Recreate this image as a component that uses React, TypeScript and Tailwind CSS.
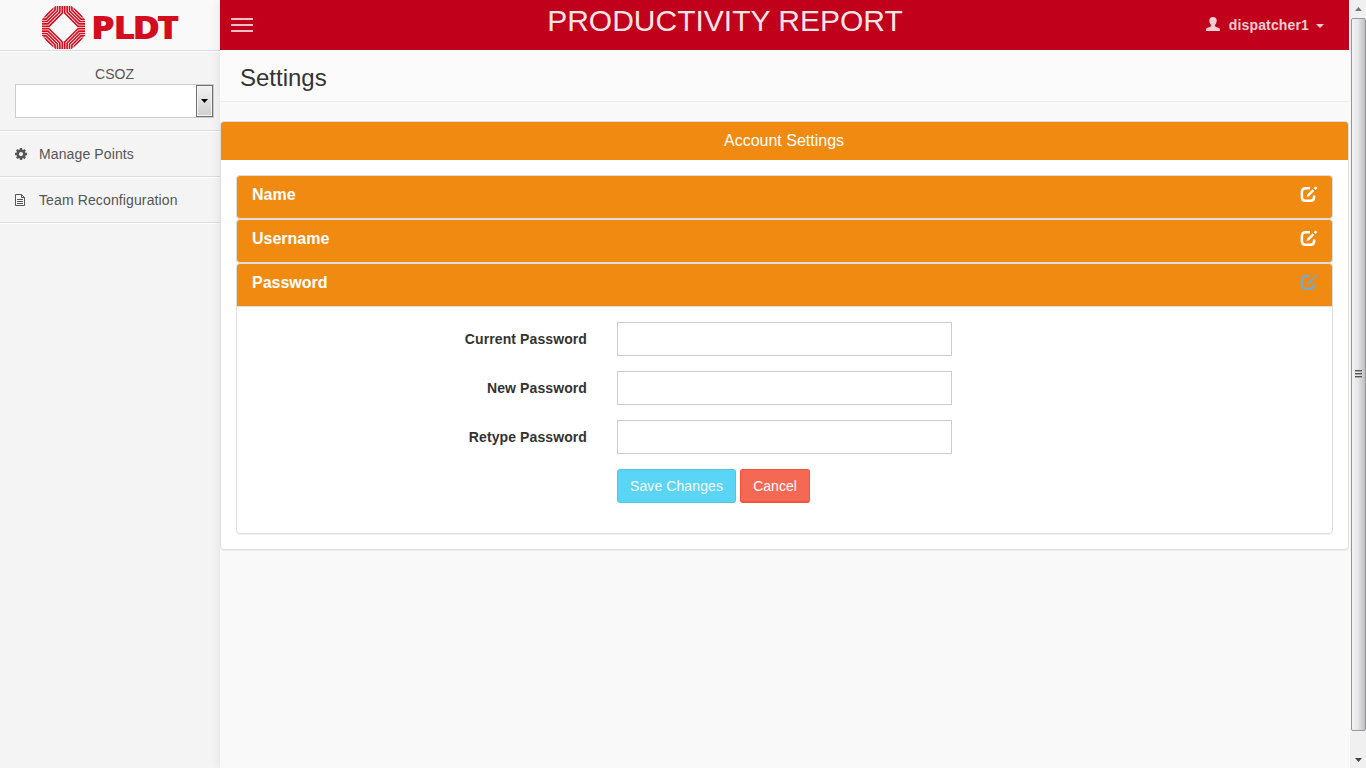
import React from "react";

const SPOKES = [1.2, 3.6, 6, 8.4, 10.8];

function LogoMark() {
  return (
    <svg width="44" height="44" viewBox="-22.5 -22.5 44 44" className="block">
      <defs>
        <clipPath id="octagon">
          <path d="M-8 -21.5H8L15.500 -15.500L21.500 -8V8L15.500 15.500L8 21.500H-8L-15.500 15.500L-21.500 8V-8L-15.500 -15.500Z" />
        </clipPath>
      </defs>
      <g clipPath="url(#octagon)" fill="none" stroke="#d50b1e" strokeWidth="1.65">
        {[[1, 1], [-1, 1], [1, -1], [-1, -1]].map(([sx, sy]) => (
          <g key={`${sx}${sy}`} transform={`scale(${sx} ${sy})`}>
            {SPOKES.map((o) => {
              const bend = 14 + o * 0.42;
              return <path key={o} d={`M${o} 22V${bend}L${bend} ${o}H22`} />;
            })}
          </g>
        ))}
      </g>
    </svg>
  );
}

function Logo() {
  return (
    <div className="flex h-[50px] shrink-0 items-start bg-[#f9f9f9] pl-[41px]">
      <div className="pt-[5px]"><LogoMark /></div>
      <svg width="100" height="50" viewBox="0 0 100 50" fill="#d50b1e" fontFamily="Open Sans, sans-serif" fontWeight="800" fontSize="32" className="ml-[6px]">
        <g transform="scale(1.18 1)">
          <text y="39" x="0 19 35.200 55.900">PLDT</text>
        </g>
      </svg>
    </div>
  );
}

function GearIcon() {
  return (
    <svg width="14" height="14" viewBox="0 0 1792 1792" fill="currentColor">
      <path d="M1152 896q0-106-75-181t-181-75-181 75-75 181 75 181 181 75 181-75 75-181zm512-109v222q0 12-8 23t-20 13l-185 28q-19 54-39 91 35 50 107 138 10 12 10 25t-9 23q-27 37-99 108t-94 71q-12 0-26-9l-138-108q-44 23-91 38-16 136-29 186-7 28-36 28h-222q-14 0-24.500-8.500t-11.500-21.500l-28-184q-49-16-90-37l-141 107q-10 9-25 9-14 0-25-11-126-114-165-168-7-10-7-23 0-12 8-23 15-21 51-66.500t54-70.500q-27-50-41-99l-183-27q-13-2-21-12.500t-8-23.500v-222q0-12 8-23t19-13l186-28q14-46 39-92-40-57-107-138-10-12-10-24 0-10 9-23 26-36 98.500-107.500t94.500-71.500q13 0 26 10l138 107q44-23 91-38 16-136 29-186 7-28 36-28h222q14 0 24.500 8.500t11.500 21.500l28 184q49 16 90 37l142-107q9-9 24-9 13 0 25 10 129 119 165 170 7 8 7 22 0 12-8 23-15 21-51 66.500t-54 70.500q26 50 41 98l183 28q13 2 21 12.500t8 23.500z" />
    </svg>
  );
}

function FileIcon() {
  return (
    <svg width="12" height="14" viewBox="0 0 12 14" fill="none" stroke="currentColor">
      <path d="M1.500 1.500H7.500L10.500 4.500V12.500H1.500Z" />
      <path d="M7.500 1.500V4.500H10.500M3 6.500H9M3 8.500H9M3 10.500H9" />
    </svg>
  );
}

function UserIcon() {
  return (
    <svg width="14" height="14" viewBox="0 0 14 14" fill="currentColor" className="-mt-[2px]">
      <path d="M7 0C4.600 0 3.300 1.300 3.300 3.400c0 1.900.7 3.500 1.800 4.500v1.300C4.300 10.100.3 10.500 0 12.100V14h14v-1.900c-.3-1.600-4.300-2-5.100-2.900V7.900c1.100-1 1.800-2.600 1.800-4.500C10.700 1.300 9.400 0 7 0Z" />
    </svg>
  );
}

function EditIcon() {
  return (
    <svg width="18" height="17" viewBox="0 0 18 17" fill="none">
      <path d="M10 2.200H5.500Q1.900 2.200 1.900 5.800V11.200Q1.900 14.800 5.500 14.800H10.500Q14.100 14.800 14.100 11.200V9.400" stroke="currentColor" strokeWidth="2.500" />
      <path d="M6.600 11L7.400 8.500L12.600 3.300L14.300 5L9.100 10.200Z" fill="currentColor" />
      <path d="M13.700 2.200L15 .9Q15.600.3 16.200.9L16.900 1.600Q17.500 2.200 16.900 2.800L15.500 4.100Z" fill="currentColor" />
    </svg>
  );
}

function NavItem({ icon, label }: { icon: React.ReactNode; label: string }) {
  return (
    <a className="flex h-[46px] items-center border-b border-[#dbdbdb] pl-[14px] text-[14px] tracking-[0.12px] text-[#555] shadow-[0_1px_0_#fff]">
      <span className="flex w-[25px]">{icon}</span>
      <span className="pt-[2px]">{label}</span>
    </a>
  );
}

function Sidebar() {
  return (
    <aside className="flex w-[220px] shrink-0 flex-col bg-[#f4f4f4]">
      <Logo />
      <div className="h-[81px] border-y border-[#dbdbdb] pl-[15px] pt-[14px] shadow-[0_1px_0_#fff,inset_0_1px_0_#fff]">
        <div className="w-[199px] pb-px text-center text-[14px] leading-[18px] text-[#555]">CSOZ</div>
        <div className="flex h-[34px] w-[199px] justify-end border border-[#ccc] bg-white">
          <div className="flex w-[17px] items-center justify-center border border-[#707070] bg-linear-to-b from-[#f2f2f2] to-[#cfcfcf] shadow-[inset_0_0_0_1px_#f5f5f5]">
            <svg width="7" height="4" viewBox="0 0 7 4"><path d="M0 0H7L3.500 4Z" fill="#000" /></svg>
          </div>
        </div>
      </div>
      <nav>
        <NavItem icon={<GearIcon />} label="Manage Points" />
        <NavItem icon={<FileIcon />} label="Team Reconfiguration" />
      </nav>
    </aside>
  );
}

function Header() {
  return (
    <header className="flex h-[50px] shrink-0 bg-[#c1001b] text-[#f3cdd2]">
      <div className="flex w-[210px] flex-col gap-[4px] pl-[11px] pt-[18px]">
        <span className="h-[2px] w-[22px] bg-[#f0bfc6]" />
        <span className="h-[2px] w-[22px] bg-[#f0bfc6]" />
        <span className="h-[2px] w-[22px] bg-[#f0bfc6]" />
      </div>
      <h1 className="w-[590px] pt-[4px] text-center text-[30px] leading-[34px] text-[#f9e5e8]">PRODUCTIVITY REPORT</h1>
      <div className="flex grow items-center justify-end pr-[25px] text-[14px] font-bold">
        <UserIcon />
        <span className="pl-[9px] pr-[7px] tracking-[0.15px]">dispatcher1</span>
        <svg width="8" height="4" viewBox="0 0 8 4" className="mt-[2px]"><path d="M0 0H8L4 4Z" fill="currentColor" /></svg>
      </div>
    </header>
  );
}

function PanelHeading({ title, active = false }: { title: string; active?: boolean }) {
  return (
    <div className="flex h-[42px] justify-between pl-[15px] pr-[14px] pt-[10px] text-[16px] font-bold leading-[18px] text-white">
      <span>{title}</span>
      <span className={active ? "text-[#7ba9bd]" : "text-white"}><EditIcon /></span>
    </div>
  );
}

function Field({ label }: { label: string }) {
  return (
    <label className="mb-[15px] flex h-[34px] items-center">
      <span className="w-[350px] text-right text-[14px] font-bold tracking-[0.1px] text-[#333]">{label}</span>
      <input type="password" className="ml-[30px] h-[34px] w-[335px] border border-[#ccc] bg-white outline-none" />
    </label>
  );
}

function Settings() {
  return (
    <section className="mt-[19px] h-[429px] rounded-[4px] border border-[#ddd] bg-white shadow-[0_1px_1px_rgba(0,0,0,0.05)]">
      <h2 className="h-[38px] rounded-t-[3px] bg-[#f18a10] pr-px text-center text-[16px] leading-[37px] text-white">Account Settings</h2>
      <div className="px-[15px] pt-[15px]">
        <div className="h-[44px] rounded-[4px] border border-[#ddd] bg-[#f18a10] shadow-[0_1px_1px_rgba(0,0,0,0.05)]"><PanelHeading title="Name" /></div>
        <div className="h-[44px] rounded-[4px] border border-[#ddd] bg-[#f18a10] shadow-[0_1px_1px_rgba(0,0,0,0.05)]"><PanelHeading title="Username" /></div>
        <div className="h-[271px] rounded-[4px] border border-[#ddd] shadow-[0_1px_1px_rgba(0,0,0,0.05)]">
          <div className="rounded-t-[3px] bg-[#f18a10]"><PanelHeading title="Password" active /></div>
          <form className="border-t border-[#ddd] pt-[15px]">
            <Field label="Current Password" />
            <Field label="New Password" />
            <Field label="Retype Password" />
            <div className="flex gap-[4px] pl-[380px] text-[14px] text-white">
              <button type="button" className="h-[34px] w-[119px] rounded-[3px] border border-[#4fc6e3] bg-[#5bd5f5] tracking-[0.1px] text-[#f5fdff]">Save Changes</button>
              <button type="button" className="h-[34px] w-[70px] rounded-[3px] border border-b-2 border-[#f4543c] bg-[#f56954] pt-px">Cancel</button>
            </div>
          </form>
        </div>
      </div>
    </section>
  );
}

function Scrollbar() {
  return (
    <div className="flex w-[17px] shrink-0 flex-col items-center border-l border-[#fff] bg-[#f0f0f0]">
      <div className="flex h-[18px] shrink-0 items-center justify-center">
        <svg width="7" height="4" viewBox="0 0 7 4"><path d="M0 4L3.500 0L7 4Z" fill="#777" /></svg>
      </div>
      <div className="flex h-[713px] w-[15px] flex-col items-center justify-center gap-px rounded-[2px] border border-[#979797] bg-linear-to-r from-[#f4f4f4] via-[#e4e4e7] to-[#bdbdc2] pb-[2px]">
        <span className="h-[2px] w-[7px] border-b border-[#aaa] bg-[#555]" />
        <span className="h-[2px] w-[7px] border-b border-[#aaa] bg-[#555]" />
        <span className="h-[2px] w-[7px] border-b border-[#aaa] bg-[#555]" />
      </div>
      <div className="flex grow items-end justify-center pb-[6px]">
        <svg width="7" height="4" viewBox="0 0 7 4"><path d="M0 0H7L3.500 4Z" fill="#444" /></svg>
      </div>
    </div>
  );
}

export default function App() {
  return (
    <div className="flex h-[768px] w-[1366px] overflow-hidden bg-[#f9f9f9] font-['Liberation_Sans',Arial,sans-serif]">
      <Sidebar />
      <main className="flex w-[1129px] flex-col shadow-[-3px_0_8px_rgba(0,0,0,0.05)]">
        <Header />
        <div className="h-[52px] border-b border-[#ececec] bg-[#fbfbfb] pl-[20px] pt-[14px] text-[24px] leading-[27px] text-[#333]">Settings</div>
        <Settings />
      </main>
      <Scrollbar />
    </div>
  );
}
